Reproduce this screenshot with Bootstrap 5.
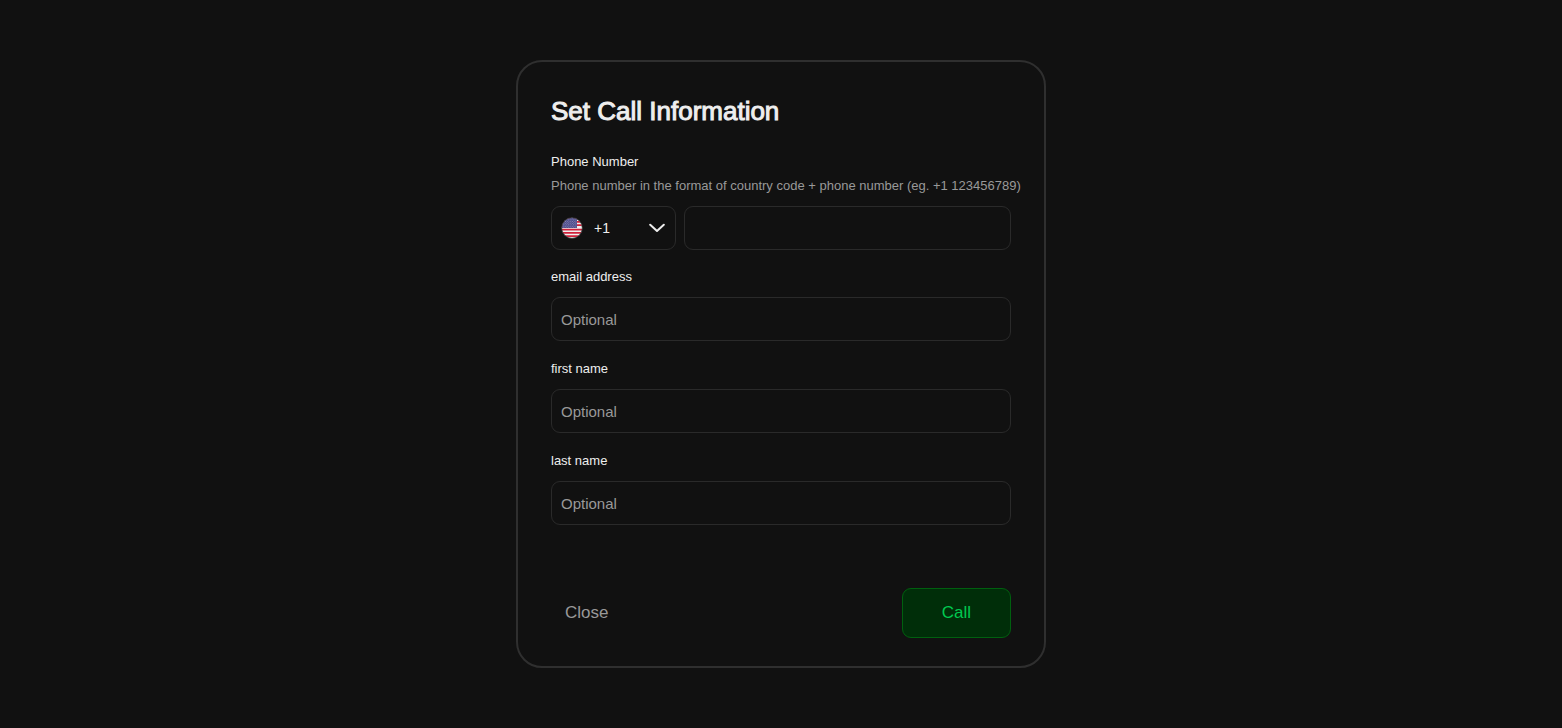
<!DOCTYPE html>
<html lang="en" data-bs-theme="dark">
<head>
<meta charset="utf-8">
<meta name="viewport" content="width=device-width, initial-scale=1">
<title>Set Call Information</title>
<link href="https://cdn.jsdelivr.net/npm/bootstrap@5.3.0/dist/css/bootstrap.min.css" rel="stylesheet">
<style>
  body { background: #111; color: #eee; font-family: "Liberation Sans", Arial, sans-serif; }
  .call-dialog { max-width: 530px; padding: 33px 33px 28px; border: 2px solid #2f2f2f; border-radius: 26px; }
  .call-title { font-size: 26px; font-weight: 400; line-height: 32px; color: #eee; margin-bottom: 23px; -webkit-text-stroke: 1px #eee; }
  .field-label { font-size: 13px; line-height: 24px; color: #eee; }
  .field-help { font-size: 13px; line-height: 24px; color: #999; }
  .phone-row { margin-bottom: 15px; }
  .call-dialog .form-control, .call-dialog .form-select {
    height: 44px; padding: 0 9px; font-size: 15px; line-height: 24px;
    color: #eee; background-color: transparent; border: 1px solid #2a2a2a; border-radius: 9px;
  }
  .call-dialog .form-control::placeholder { color: #999; opacity: 1; }
  .code-picker { width: 125px; }
  .call-dialog .code-picker .form-select { padding-left: 42px; font-size: 14px; background-image: none; }
  .code-picker svg { pointer-events: none; }
  .picker-flag { left: 10px; }
  .picker-arrow { right: 11px; }
  .dialog-actions { margin-top: 63px; }
  .dialog-actions .btn { height: 50px; font-size: 17px; line-height: 24px; border-radius: 9px; }
  .btn-dismiss { color: #999; padding: 0 13px; }
  .btn-call { width: 109px; color: #00c950; background: #002e09; border-color: #00600f; }
  .btn-call:hover { color: #00c950; background: #003d0c; border-color: #00600f; }
  .btn-dismiss:hover { color: #ccc; }
</style>
</head>
<body>
<main class="min-vh-100 d-flex align-items-center justify-content-center">
  <form class="call-dialog w-100">
    <h1 class="call-title">Set Call Information</h1>

    <label class="field-label d-block" for="phone">Phone Number</label>
    <div class="field-help text-nowrap mb-2" id="phoneHelp">Phone number in the format of country code + phone number (eg. +1 123456789)</div>
    <div class="phone-row d-flex gap-2">
      <div class="code-picker position-relative flex-shrink-0">
        <select class="form-select" aria-label="Country code">
          <option selected>+1</option>
          <option>+44</option>
        </select>
        <svg class="picker-flag position-absolute top-50 translate-middle-y" width="22" height="22" viewBox="0 0 22 22" aria-hidden="true">
          <defs>
            <clipPath id="round"><circle cx="11" cy="11" r="10.3"/></clipPath>
            <pattern id="stars" width="2.4" height="2.4" patternUnits="userSpaceOnUse">
              <circle cx=".6" cy=".6" r=".5" fill="#aaa8cf"/><circle cx="1.8" cy="1.8" r=".5" fill="#aaa8cf"/>
            </pattern>
          </defs>
          <g clip-path="url(#round)">
            <path fill="#eee" d="M0 0h22v22H0z"/>
            <path stroke="#d0203a" stroke-width="1.7" d="M0 1.5h22M0 4.8h22M0 8.1h22M0 12.6h22M0 15.9h22M0 19.2h22"/>
            <path fill="#464585" d="M0 0h16v11H0z"/>
            <path fill="url(#stars)" d="M0 0h16v11H0z"/>
          </g>
          <circle cx="11" cy="11" r="10.4" fill="none" stroke="#343434" stroke-width=".8"/>
        </svg>
        <svg class="picker-arrow position-absolute top-50 translate-middle-y" width="16" height="10" viewBox="0 0 16 10" fill="none" stroke="#eee" stroke-width="2" stroke-linecap="round" stroke-linejoin="round" aria-hidden="true"><path d="M1.2 1.7 8 8l6.8-6.3"/></svg>
      </div>
      <input class="form-control" type="tel" id="phone" aria-describedby="phoneHelp">
    </div>

    <div class="mb-3">
      <label class="field-label d-block mb-2" for="email">email address</label>
      <input class="form-control" type="email" id="email" placeholder="Optional">
    </div>
    <div class="mb-3">
      <label class="field-label d-block mb-2" for="first">first name</label>
      <input class="form-control" type="text" id="first" placeholder="Optional">
    </div>
    <div>
      <label class="field-label d-block mb-2" for="last">last name</label>
      <input class="form-control" type="text" id="last" placeholder="Optional">
    </div>

    <div class="dialog-actions d-flex justify-content-between">
      <button class="btn btn-dismiss" type="button">Close</button>
      <button class="btn btn-call" type="submit">Call</button>
    </div>
  </form>
</main>
<script src="https://cdn.jsdelivr.net/npm/bootstrap@5.3.0/dist/js/bootstrap.bundle.min.js"></script>
</body>
</html>
